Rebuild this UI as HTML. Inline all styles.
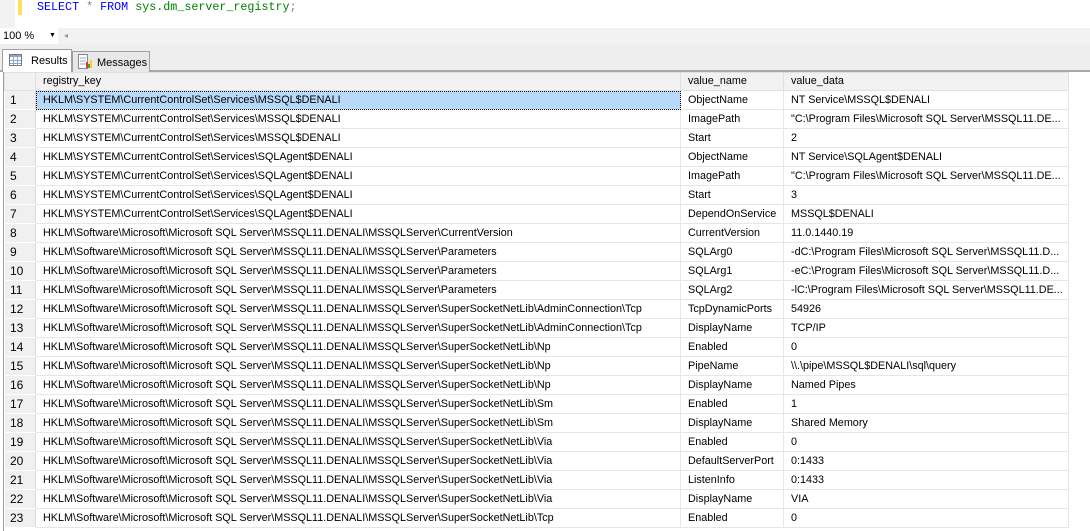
<!DOCTYPE html>
<html><head><meta charset="utf-8"><style>
*{margin:0;padding:0;box-sizing:border-box}
html,body{width:1090px;height:531px;overflow:hidden}
body{background:#fff;font-family:"Liberation Sans",Tahoma,sans-serif;font-size:10.8px;color:#000;position:relative}
.ed{position:absolute;left:0;top:0;width:1090px;height:28px;background:#fff}
.gut{position:absolute;left:0;top:0;width:15px;height:28px;background:#f2f2f2}
.yb{position:absolute;left:18px;top:0;width:4px;height:15px;background:#fee05b}
.sql{position:absolute;left:37px;top:0;font-family:"Liberation Mono",monospace;font-size:11.7px;line-height:15px}
.bar{position:absolute;left:0;top:28px;width:1090px;height:16px;background:#f2f2f2}
.zoom{position:absolute;left:0;top:28px;width:58px;height:16px;background:#fff;font-size:11px;line-height:16px;padding-left:3px}
.zoom span{position:absolute;left:49px;top:0;font-size:7px}
.tabarea{position:absolute;left:0;top:44px;width:1090px;height:27px;background:#eee}
.line{position:absolute;left:0;top:70px;width:1090px;height:2px;background:#a8a8b0}
.tab{position:absolute;height:22px;border:1px solid #a0a0a0;border-bottom:none;font-size:11px;line-height:20px}
.t1{left:2px;top:49px;width:70px;background:#fff;height:23px}
.t2{left:72px;top:51px;width:78px;background:#e8e8e8}
.grid{position:absolute;left:3px;top:72px;width:1087px;height:459px;background:#fff;border-left:1px solid #a0a0a0;overflow:hidden}
table{position:absolute;left:0;top:0;border-collapse:collapse;table-layout:fixed;width:1064px}
td{height:19px;border:1px solid #e6e6e6;white-space:nowrap;overflow:hidden;text-overflow:clip;padding-left:7px;line-height:17px}
td.n{background:#f0f0f0;border:1px solid #fff;border-right:1px solid #d8d8d8;padding-left:5px;font-size:12px}
tr.h td{background:#f2f2f2;height:18px;border-color:#e0e0e0}
tr.h td.n{background:#f2f2f2}
.sel{background:#b9d9fb;outline:1px dotted #000;outline-offset:-1px}
</style></head><body>
<div class="ed"><div class="gut"></div><div class="yb"></div>
<div class="sql"><span style="color:#0000ff">SELECT</span> <span style="color:#808080">*</span> <span style="color:#0000ff">FROM</span> <span style="color:#008000">sys.dm_server_registry</span><span style="color:#808080">;</span></div></div>
<div class="bar"></div>
<div class="zoom">100 %<span>▼</span></div>
<div style="position:absolute;left:64px;top:31px;font-size:8px;color:#999">◂</div>
<div class="tabarea"></div>
<div class="line"></div>
<div class="tab t1"><svg style="position:absolute;left:6px;top:4px" width="13" height="12"><rect x=".5" y=".5" width="12" height="11" fill="#fff" stroke="#6a7b96"/><rect x="1" y="1" width="11" height="2" fill="#8fa6c8"/><path d="M1 6.5H12M1 9.5H12M4.5 3V11M8.5 3V11" stroke="#8fa6c8"/></svg><span style="position:absolute;left:28px;top:1px">Results</span></div>
<div class="tab t2"><svg style="position:absolute;left:5px;top:2px" width="14" height="16"><rect x=".5" y=".5" width="9" height="14" fill="#fff" stroke="#7a8aa0"/><path d="M2 4H8M2 7H8M2 10H8" stroke="#9ab"/><rect x="8" y="8" width="2" height="6" fill="#e33"/><rect x="10" y="10" width="2" height="4" fill="#3a3"/><rect x="12" y="6" width="2" height="8" fill="#fc3"/></svg><span style="position:absolute;left:24px;top:1px">Messages</span></div>
<div class="grid"><table>
<colgroup><col style="width:31px"><col style="width:645px"><col style="width:103px"><col style="width:285px"></colgroup>
<tr class="h"><td class="n"></td><td>registry_key</td><td>value_name</td><td>value_data</td></tr>
<tr><td class="n">1</td><td class="sel">HKLM\SYSTEM\CurrentControlSet\Services\MSSQL$DENALI</td><td>ObjectName</td><td>NT Service\MSSQL$DENALI</td></tr>
<tr><td class="n">2</td><td>HKLM\SYSTEM\CurrentControlSet\Services\MSSQL$DENALI</td><td>ImagePath</td><td>"C:\Program Files\Microsoft SQL Server\MSSQL11.DE...</td></tr>
<tr><td class="n">3</td><td>HKLM\SYSTEM\CurrentControlSet\Services\MSSQL$DENALI</td><td>Start</td><td>2</td></tr>
<tr><td class="n">4</td><td>HKLM\SYSTEM\CurrentControlSet\Services\SQLAgent$DENALI</td><td>ObjectName</td><td>NT Service\SQLAgent$DENALI</td></tr>
<tr><td class="n">5</td><td>HKLM\SYSTEM\CurrentControlSet\Services\SQLAgent$DENALI</td><td>ImagePath</td><td>"C:\Program Files\Microsoft SQL Server\MSSQL11.DE...</td></tr>
<tr><td class="n">6</td><td>HKLM\SYSTEM\CurrentControlSet\Services\SQLAgent$DENALI</td><td>Start</td><td>3</td></tr>
<tr><td class="n">7</td><td>HKLM\SYSTEM\CurrentControlSet\Services\SQLAgent$DENALI</td><td>DependOnService</td><td>MSSQL$DENALI</td></tr>
<tr><td class="n">8</td><td>HKLM\Software\Microsoft\Microsoft SQL Server\MSSQL11.DENALI\MSSQLServer\CurrentVersion</td><td>CurrentVersion</td><td>11.0.1440.19</td></tr>
<tr><td class="n">9</td><td>HKLM\Software\Microsoft\Microsoft SQL Server\MSSQL11.DENALI\MSSQLServer\Parameters</td><td>SQLArg0</td><td>-dC:\Program Files\Microsoft SQL Server\MSSQL11.D...</td></tr>
<tr><td class="n">10</td><td>HKLM\Software\Microsoft\Microsoft SQL Server\MSSQL11.DENALI\MSSQLServer\Parameters</td><td>SQLArg1</td><td>-eC:\Program Files\Microsoft SQL Server\MSSQL11.D...</td></tr>
<tr><td class="n">11</td><td>HKLM\Software\Microsoft\Microsoft SQL Server\MSSQL11.DENALI\MSSQLServer\Parameters</td><td>SQLArg2</td><td>-lC:\Program Files\Microsoft SQL Server\MSSQL11.DE...</td></tr>
<tr><td class="n">12</td><td>HKLM\Software\Microsoft\Microsoft SQL Server\MSSQL11.DENALI\MSSQLServer\SuperSocketNetLib\AdminConnection\Tcp</td><td>TcpDynamicPorts</td><td>54926</td></tr>
<tr><td class="n">13</td><td>HKLM\Software\Microsoft\Microsoft SQL Server\MSSQL11.DENALI\MSSQLServer\SuperSocketNetLib\AdminConnection\Tcp</td><td>DisplayName</td><td>TCP/IP</td></tr>
<tr><td class="n">14</td><td>HKLM\Software\Microsoft\Microsoft SQL Server\MSSQL11.DENALI\MSSQLServer\SuperSocketNetLib\Np</td><td>Enabled</td><td>0</td></tr>
<tr><td class="n">15</td><td>HKLM\Software\Microsoft\Microsoft SQL Server\MSSQL11.DENALI\MSSQLServer\SuperSocketNetLib\Np</td><td>PipeName</td><td>\\.\pipe\MSSQL$DENALI\sql\query</td></tr>
<tr><td class="n">16</td><td>HKLM\Software\Microsoft\Microsoft SQL Server\MSSQL11.DENALI\MSSQLServer\SuperSocketNetLib\Np</td><td>DisplayName</td><td>Named Pipes</td></tr>
<tr><td class="n">17</td><td>HKLM\Software\Microsoft\Microsoft SQL Server\MSSQL11.DENALI\MSSQLServer\SuperSocketNetLib\Sm</td><td>Enabled</td><td>1</td></tr>
<tr><td class="n">18</td><td>HKLM\Software\Microsoft\Microsoft SQL Server\MSSQL11.DENALI\MSSQLServer\SuperSocketNetLib\Sm</td><td>DisplayName</td><td>Shared Memory</td></tr>
<tr><td class="n">19</td><td>HKLM\Software\Microsoft\Microsoft SQL Server\MSSQL11.DENALI\MSSQLServer\SuperSocketNetLib\Via</td><td>Enabled</td><td>0</td></tr>
<tr><td class="n">20</td><td>HKLM\Software\Microsoft\Microsoft SQL Server\MSSQL11.DENALI\MSSQLServer\SuperSocketNetLib\Via</td><td>DefaultServerPort</td><td>0:1433</td></tr>
<tr><td class="n">21</td><td>HKLM\Software\Microsoft\Microsoft SQL Server\MSSQL11.DENALI\MSSQLServer\SuperSocketNetLib\Via</td><td>ListenInfo</td><td>0:1433</td></tr>
<tr><td class="n">22</td><td>HKLM\Software\Microsoft\Microsoft SQL Server\MSSQL11.DENALI\MSSQLServer\SuperSocketNetLib\Via</td><td>DisplayName</td><td>VIA</td></tr>
<tr><td class="n">23</td><td>HKLM\Software\Microsoft\Microsoft SQL Server\MSSQL11.DENALI\MSSQLServer\SuperSocketNetLib\Tcp</td><td>Enabled</td><td>0</td></tr>
</table></div>
</body></html>
